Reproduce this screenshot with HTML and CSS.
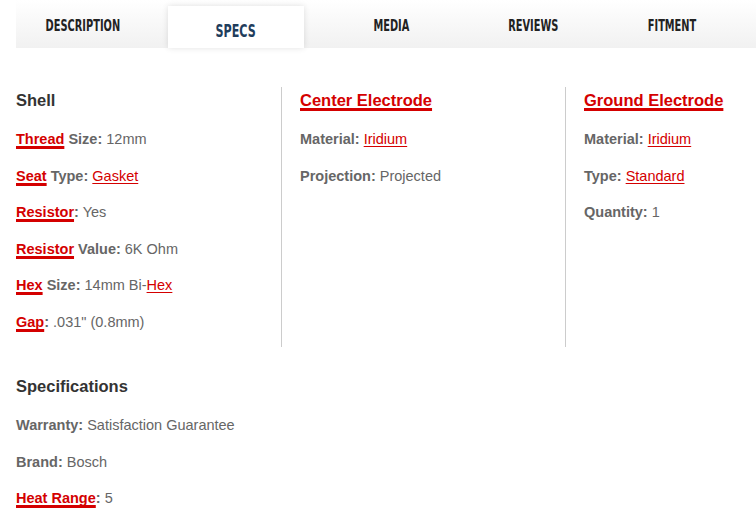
FILE: index.html
```html
<!DOCTYPE html>
<html lang="en">
<head>
  <meta charset="UTF-8">
  <meta name="viewport" content="width=device-width, initial-scale=1.0">
  <title>Specs</title>
  <link rel="stylesheet" href="styles.css">
</head>
<body>

<div class="tabs">
  <div class="tab tab-first"><span>Description</span></div>
  <div class="tab active"><span>Specs</span></div>
  <div class="tab"><span>Media</span></div>
  <div class="tab"><span>Reviews</span></div>
  <div class="tab"><span>Fitment</span></div>
</div>

<div class="specs">
  <div class="cols">
    <div class="col">
      <h3>Shell</h3>
      <p><a class="key" href="#">Thread</a> <b>Size:</b> 12mm</p>
      <p><a class="key" href="#">Seat</a> <b>Type:</b> <a href="#">Gasket</a></p>
      <p><a class="key" href="#">Resistor</a><b>:</b> Yes</p>
      <p><a class="key" href="#">Resistor</a> <b>Value:</b> 6K Ohm</p>
      <p><a class="key" href="#">Hex</a> <b>Size:</b> 14mm Bi-<a href="#">Hex</a></p>
      <p><a class="key" href="#">Gap</a><b>:</b> .031" (0.8mm)</p>
    </div>
    <div class="col">
      <h3><a class="key" href="#">Center Electrode</a></h3>
      <p><b>Material:</b> <a href="#">Iridium</a></p>
      <p><b>Projection:</b> Projected</p>
    </div>
    <div class="col">
      <h3><a class="key" href="#">Ground Electrode</a></h3>
      <p><b>Material:</b> <a href="#">Iridium</a></p>
      <p><b>Type:</b> <a href="#">Standard</a></p>
      <p><b>Quantity:</b> 1</p>
    </div>
  </div>

  <div class="more">
    <h3>Specifications</h3>
    <p><b>Warranty:</b> Satisfaction Guarantee</p>
    <p><b>Brand:</b> Bosch</p>
    <p><a class="key" href="#">Heat Range</a><b>:</b> 5</p>
  </div>
</div>

</body>
</html>
```

FILE: styles.css
```css
body {
  margin: 0;
  font-family: "Liberation Sans", Arial, sans-serif;
  font-size: 14.5px;
  color: #666;
  background: #fff;
  overflow: hidden;
}
.tabs {
  display: grid;
  grid-template-columns: 152px 136px 174px 110px 1fr;
  height: 48px;
  margin-left: 16px;
  background: linear-gradient(#fff, #f1f1f1);
}
.tab {
  display: flex;
  align-items: center;
  justify-content: center;
  padding-top: 4px;
  font-family: "DejaVu Sans", sans-serif;
  font-weight: bold;
  font-size: 15px;
  text-transform: uppercase;
  color: #222;
}
.tab span {
  display: inline-block;
  transform: scaleX(0.655);
}
.tab-first {
  justify-content: flex-start;
  padding-left: 10px;
}
.tab.active {
  margin-top: 6px;
  padding-top: 7px;
  background: #fff;
  color: #1f3d5c;
  font-size: 17px;
  box-shadow: 0 0 6px rgba(0,0,0,0.12);
}
.specs {
  padding: 39px 0 0 16px;
}
.cols {
  display: grid;
  grid-template-columns: 265px 284px 1fr;
}
.col + .col {
  border-left: 1px solid #ccc;
  padding-left: 18px;
}
h3 {
  margin: 1px 0 17px;
  font-size: 16.5px;
  line-height: 24px;
  color: #333;
}
p {
  margin: 0 0 15.6px;
  line-height: 21px;
}
.col p:last-child {
  margin-bottom: 14px;
}
b {
  color: #666;
}
a {
  color: #d40000;
  text-decoration: underline;
  text-decoration-thickness: 1px;
  text-underline-offset: 2px;
  text-decoration-skip-ink: none;
}
a.key {
  font-weight: bold;
  text-decoration-thickness: 2.5px;
  text-underline-offset: 2px;
}
.more {
  padding-top: 26px;
}
```
